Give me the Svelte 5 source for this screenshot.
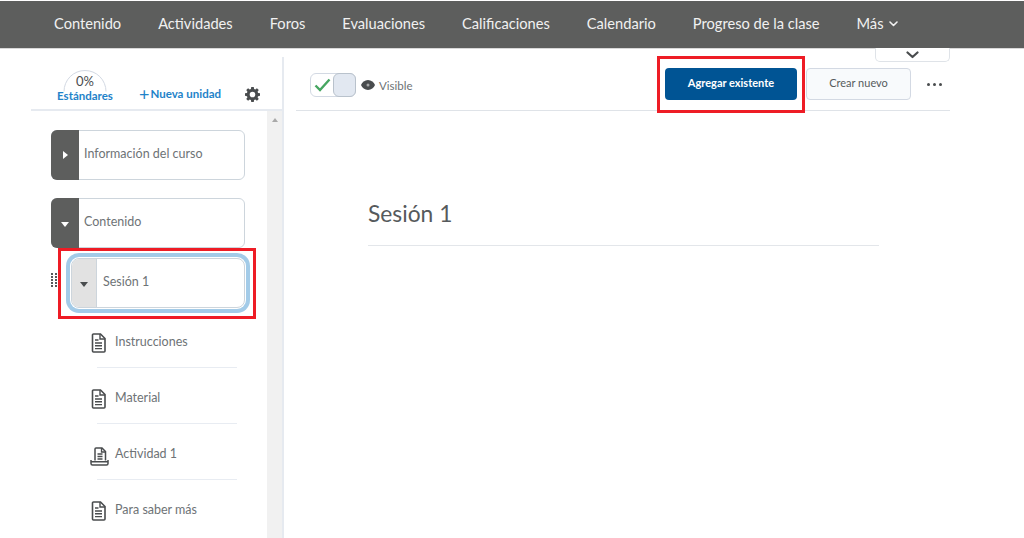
<script>
  const tabs = ['Contenido', 'Actividades', 'Foros', 'Evaluaciones', 'Calificaciones', 'Calendario', 'Progreso de la clase'];
  const items = [
    { name: 'Instrucciones', icon: 'doc' },
    { name: 'Material', icon: 'doc' },
    { name: 'Actividad 1', icon: 'tray' },
    { name: 'Para saber más', icon: 'doc' }
  ];
</script>

<div class="page">
  <nav class="topnav">
    {#each tabs as tab}
      <span class="tab">{tab}</span>
    {/each}
    <span class="tab more">
      Más
      <svg width="9" height="6" viewBox="0 0 9 6"><path d="M1 1l3.500 3.500L8 1" fill="none" stroke="#f1f1f1" stroke-width="1.600" stroke-linecap="round" stroke-linejoin="round" /></svg>
    </span>
  </nav>

  <div class="layout">
    <aside class="sidebar">
      <div class="side-head">
        <div class="gauge">
          <svg class="arc" width="46" height="24" viewBox="0 0 46 24"><path d="M2 23.500a21 21 0 0 1 42 0" fill="none" stroke="#d3d9e3" stroke-width="1" /></svg>
          <span class="pct">0%</span>
          <span class="std">Estándares</span>
        </div>
        <span class="new-unit"><span class="plus">+</span>Nueva unidad</span>
        <svg class="gear" width="15" height="15" viewBox="0 0 24 24">
          <path fill="#494c4e" fill-rule="evenodd" d="M10 1h4l.6 3.100 1.900.8L19.100 3 22 5.900l-1.900 2.600.8 1.900L24 11v4l-3.100.6-.8 1.900 1.900 2.600L19.100 23l-2.600-1.900-1.900.8L14 25h-4l-.6-3.100-1.900-.8L4.900 23 2 20.100l1.900-2.600-.8-1.900L0 15v-4l3.100-.6.8-1.900L2 5.900 4.900 3l2.600 1.900 1.900-.8zM12 8.500a4.500 4.500 0 1 0 0 9 4.500 4.500 0 0 0 0-9z" transform="translate(0 -1)" />
        </svg>
      </div>

      <div class="side-body">
        <div class="tree">
          <div class="card">
            <span class="handle dark"><span class="arrow-right"></span></span>
            <span class="card-label">Información del curso</span>
          </div>
          <div class="card second">
            <span class="handle dark"><span class="arrow-down white"></span></span>
            <span class="card-label">Contenido</span>
          </div>

          <div class="session-row">
            <span class="grip">
              {#each Array(10) as _}<i></i>{/each}
            </span>
            <div class="session">
              <span class="handle light"><span class="arrow-down"></span></span>
              <span class="card-label">Sesión 1</span>
            </div>
          </div>

          <ul class="items">
            {#each items as item}
              <li class="item">
                {#if item.icon === 'doc'}
                  <svg class="item-icon" width="15" height="20" viewBox="0 0 15 20">
                    <path d="M2.500 1h7l4.500 4.500V18a1 1 0 0 1-1 1H2.500a1 1 0 0 1-1-1V2a1 1 0 0 1 1-1z" fill="none" stroke="#494c4e" stroke-width="1.600" />
                    <path d="M9 1v5h5M4 7h3.500M4 10h7M4 12.800h7M4 15.600h7" fill="none" stroke="#494c4e" stroke-width="1.400" />
                  </svg>
                {:else}
                  <svg class="item-icon tray" width="19" height="19" viewBox="0 0 19 19">
                    <path d="M5 13.500V2a1 1 0 0 1 1-1h6l3.500 3.500v9" fill="none" stroke="#494c4e" stroke-width="1.500" />
                    <path d="M11.500 1v4h4M7.500 7h5M7.500 9.500h5M7.500 12h5" fill="none" stroke="#494c4e" stroke-width="1.300" />
                    <path d="M1 13v3.500a1.500 1.500 0 0 0 1.500 1.500h14a1.500 1.500 0 0 0 1.500-1.500V13M1 14.800h17" fill="none" stroke="#494c4e" stroke-width="1.500" />
                  </svg>
                {/if}
                <span class="item-name">{item.name}</span>
              </li>
            {/each}
          </ul>
        </div>
        <div class="scrollbar"><span class="scroll-up"></span></div>
      </div>
    </aside>

    <main class="content">
      <div class="toolbar">
        <div class="toggle">
          <svg class="check" width="17" height="14" viewBox="0 0 17 14"><path d="M1.500 7.500l4.500 4.500L15.500 1.500" fill="none" stroke="#46a661" stroke-width="2.400" /></svg>
          <span class="knob"></span>
        </div>
        <svg class="eye" width="14" height="10" viewBox="0 0 14 10">
          <path fill="#494c4e" d="M7 0c3.300 0 5.800 2.300 7 5-1.200 2.700-3.700 5-7 5S1.200 7.700 0 5c1.200-2.700 3.700-5 7-5z" />
          <circle cx="7" cy="5" r="1.500" fill="#a5a7a8" />
        </svg>
        <span class="visible">Visible</span>
        <button class="btn primary">Agregar existente</button>
        <button class="btn secondary">Crear nuevo</button>
        <span class="dots"><i></i><i></i><i></i></span>
      </div>
      <section class="unit">
        <h1>Sesión 1</h1>
      </section>
    </main>
  </div>

  <div class="collapse-tab">
    <svg width="13" height="8" viewBox="0 0 13 8"><path d="M1.500 1.500l5 4.500 5-4.500" fill="none" stroke="#494c4e" stroke-width="2.200" stroke-linecap="round" stroke-linejoin="round" /></svg>
  </div>
  <div class="mark mark-session"></div>
  <div class="mark mark-add"></div>
</div>

<style>
  :global(body) {
    margin: 0;
    background: #fff;
  }

  .page {
    position: relative;
    width: 1024px;
    height: 538px;
    overflow: hidden;
    font-family: Lato, "Open Sans", sans-serif;
    color: #6e7376;
  }

  .topnav {
    height: 47px;
    margin-top: 1px;
    background: #5d5e5d;
    border-bottom: 1px solid #d8d8d8;
    display: flex;
    align-items: flex-start;
    gap: 37px;
    padding-left: 54px;
  }

  .tab {
    color: #f1f1f1;
    font-size: 14.650px;
    line-height: 45px;
  }

  .more {
    display: flex;
    align-items: center;
    gap: 5px;
  }

  .layout {
    display: flex;
    height: 489px;
  }

  .sidebar {
    width: 284px;
    flex: none;
    box-sizing: border-box;
    padding-left: 31px;
    border-right: 2px solid #e6eaf0;
    margin-top: 8px;
    display: flex;
    flex-direction: column;
  }

  .side-head {
    height: 54px;
    flex: none;
    box-sizing: border-box;
    border-bottom: 2px solid #e6eaf0;
    display: flex;
    align-items: flex-start;
  }

  .gauge {
    width: 58px;
    margin-left: 25px;
    margin-top: 11px;
    position: relative;
    display: flex;
    flex-direction: column;
    align-items: center;
  }

  .arc {
    position: absolute;
    top: 0;
    left: 6px;
  }

  .pct {
    font-size: 13px;
    color: #494c4e;
    line-height: 16px;
    margin-top: 5px;
  }

  .std {
    font-size: 11.500px;
    font-weight: 700;
    color: #1f83c9;
    line-height: 14px;
  }

  .new-unit {
    margin-left: 25px;
    margin-top: 29px;
    font-size: 11.500px;
    font-weight: 700;
    color: #1f83c9;
    line-height: 16px;
    white-space: nowrap;
    display: flex;
    align-items: center;
  }

  .plus {
    font-size: 18px;
    font-weight: 400;
    line-height: 16px;
    margin-right: 1px;
  }

  .gear {
    margin-left: 24px;
    margin-top: 30px;
  }

  .side-body {
    flex: 1;
    display: flex;
    min-height: 0;
    overflow: hidden;
  }

  .tree {
    flex: 1;
    min-width: 0;
    padding: 19px 0 0 20px;
  }

  .scrollbar {
    width: 15px;
    flex: none;
    background: #f1f1f1;
    display: flex;
    justify-content: center;
    padding-top: 7px;
    box-sizing: border-box;
  }

  .scroll-up {
    width: 0;
    height: 0;
    border-left: 3.500px solid transparent;
    border-right: 3.500px solid transparent;
    border-bottom: 4px solid #a9a9a9;
  }

  .card {
    width: 194px;
    height: 50px;
    box-sizing: border-box;
    border: 1px solid #cdd5dc;
    border-radius: 6px;
    display: flex;
    align-items: center;
    background: #fff;
  }

  .second {
    margin-top: 18px;
  }

  .handle {
    align-self: stretch;
    flex: none;
    display: flex;
    align-items: center;
    justify-content: center;
  }

  .handle.dark {
    width: 28px;
    margin: -1px 0 -1px -1px;
    background: #5d5e5d;
    border-radius: 6px 0 0 6px;
  }

  .handle.light {
    width: 24px;
    background: #e2e2e2;
    border-right: 1px solid #cdd5dc;
    border-radius: 7px 0 0 7px;
  }

  .arrow-right {
    width: 0;
    height: 0;
    border-top: 4px solid transparent;
    border-bottom: 4px solid transparent;
    border-left: 5px solid #fff;
  }

  .arrow-down {
    width: 0;
    height: 0;
    border-left: 4.500px solid transparent;
    border-right: 4.500px solid transparent;
    border-top: 5px solid #494c4e;
    margin-top: 3px;
  }

  .arrow-down.white {
    border-top-color: #fff;
  }

  .card-label {
    font-size: 12.500px;
    color: #6e7376;
    margin: 0 0 3px 5px;
    white-space: nowrap;
  }

  .session-row {
    display: flex;
    align-items: center;
    margin-top: 6px;
    height: 57px;
  }

  .grip {
    width: 7px;
    display: grid;
    grid-template-columns: repeat(2, 2px);
    grid-auto-rows: 2px;
    gap: 1px 2px;
    flex: none;
    margin-bottom: 5px;
  }

  .grip i {
    background: #55585a;
  }

  .session {
    width: 174px;
    height: 50px;
    margin-left: 13px;
    box-sizing: border-box;
    border: 1px solid #cdd5dc;
    border-radius: 8px;
    box-shadow: 0 0 0 1px #fff, 0 0 0 5px #a3cbe8;
    display: flex;
    align-items: center;
    background: #fff;
  }

  .session .card-label {
    margin-left: 6px;
  }

  .items {
    list-style: none;
    margin: 0;
    padding: 0 0 0 46px;
  }

  .item {
    width: 140px;
    height: 56px;
    box-sizing: border-box;
    border-bottom: 1px solid #e8ecf2;
    position: relative;
    display: flex;
    align-items: flex-start;
  }

  .item:first-child {
    height: 57px;
  }

  .item:first-child .item-name {
    margin-top: 23px;
  }

  .item:first-child .item-icon {
    top: 22px;
  }

  .item:last-child {
    border-bottom: none;
  }

  .item-icon {
    position: absolute;
    left: -6px;
    top: 21px;
  }

  .item-icon.tray {
    left: -7px;
    top: 23px;
  }

  .item-name {
    margin: 22px 0 0 18px;
    font-size: 12.500px;
    line-height: 16px;
    color: #6e7376;
    white-space: nowrap;
  }

  .content {
    flex: none;
    width: 654px;
    margin-left: 12px;
    margin-top: 8px;
  }

  .toolbar {
    height: 54px;
    box-sizing: border-box;
    border-bottom: 1px solid #dfe3e8;
    display: flex;
    align-items: center;
    padding: 3px 0 0 14px;
  }

  .toggle {
    width: 46px;
    height: 24px;
    box-sizing: border-box;
    border: 1px solid #d3d9e3;
    border-radius: 6px;
    position: relative;
    display: flex;
    align-items: center;
    justify-content: flex-end;
    background: #fff;
  }

  .check {
    position: absolute;
    left: 3px;
    top: 4px;
  }

  .knob {
    width: 23px;
    height: 24px;
    margin: -1px;
    box-sizing: border-box;
    background: #e2e8f1;
    border: 1px solid #b9c2cc;
    border-radius: 6px;
  }

  .eye {
    margin-left: 5px;
    flex: none;
  }

  .visible {
    margin-left: 4px;
    font-size: 11.500px;
    color: #6e7376;
    width: 286px;
    flex: none;
  }

  .btn {
    height: 32px;
    margin-top: -2px;
    box-sizing: border-box;
    border-radius: 4px;
    font-family: inherit;
    font-size: 11px;
    padding: 0 0 3px;
    flex: none;
  }

  .primary {
    width: 132px;
    background: #005494;
    border: none;
    color: #fff;
    font-weight: 700;
  }

  .secondary {
    width: 105px;
    margin-left: 9px;
    background: #f8fafc;
    border: 1px solid #d3d9e3;
    color: #565a5c;
  }

  .dots {
    display: flex;
    gap: 3px;
    margin: -2px 0 0 16px;
  }

  .dots i {
    width: 3px;
    height: 3px;
    border-radius: 50%;
    background: #494c4e;
  }

  .unit {
    width: 511px;
    margin-left: 72px;
    margin-top: 87px;
    border-bottom: 1px solid #e3e6ea;
    height: 47px;
  }

  h1 {
    margin: 0;
    font-size: 22.800px;
    font-weight: 400;
    line-height: 30px;
    color: #565a5c;
  }

  .collapse-tab {
    position: absolute;
    left: 875px;
    top: 48px;
    width: 75px;
    height: 14px;
    box-sizing: border-box;
    border: 1px solid #dfe3e8;
    border-top: none;
    border-radius: 0 0 5px 5px;
    display: flex;
    justify-content: center;
    align-items: flex-start;
    padding-top: 3px;
    background: #fff;
  }

  .mark {
    position: absolute;
    border: 3px solid #ee1c25;
    box-sizing: border-box;
    pointer-events: none;
  }

  .mark-session {
    left: 58px;
    top: 248px;
    width: 198px;
    height: 71px;
  }

  .mark-add {
    left: 657px;
    top: 56px;
    width: 148px;
    height: 57px;
  }
</style>
